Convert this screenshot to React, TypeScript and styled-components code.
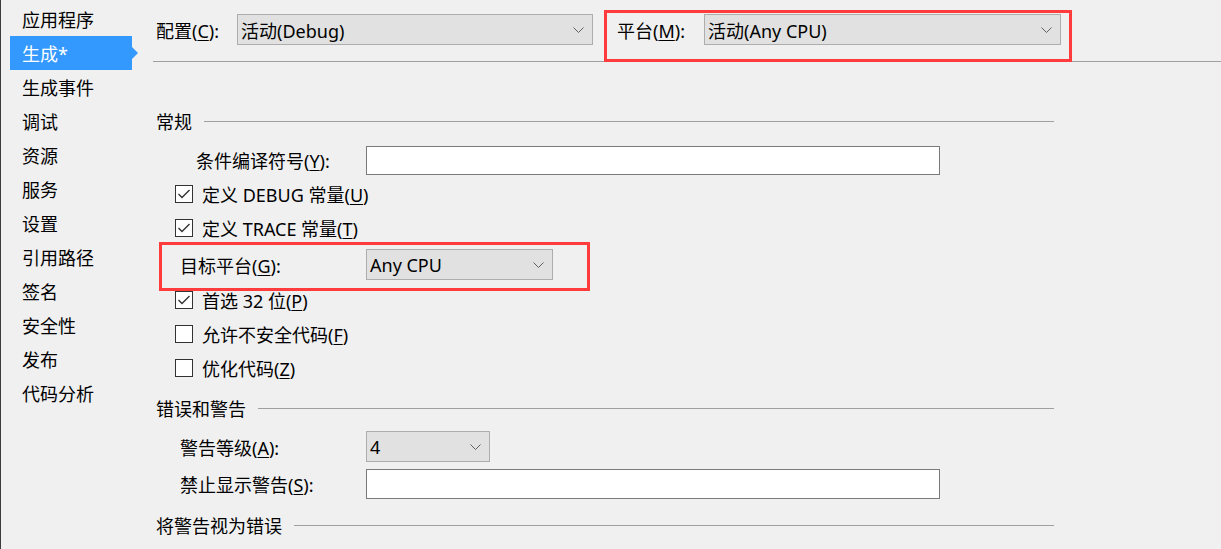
import React from 'react';
import styled, { createGlobalStyle } from 'styled-components';

const GlobalStyle = createGlobalStyle`
  html, body {
    margin: 0;
    padding: 0;
    background: #f0f0f0;
  }
  body {
    font-family: 'Noto Sans', 'Noto Sans CJK SC', sans-serif;
    font-size: 18px;
    color: #000;
  }
  * {
    box-sizing: border-box;
  }
`;

const Page = styled.div`
  display: flex;
  width: 1221px;
  height: 549px;
  overflow: hidden;
  background: #f0f0f0;
`;

const Sidebar = styled.nav`
  width: 153px;
  flex-shrink: 0;
  border-left: 1px solid #3c3c3c;
  padding-top: 2px;
`;

const NavItem = styled.div<{ $active?: boolean }>`
  position: relative;
  display: flex;
  align-items: center;
  height: 34px;
  width: 122px;
  margin-left: 9px;
  padding-left: 12px;
  white-space: nowrap;
  background: ${p => (p.$active ? '#3399ff' : 'transparent')};
  color: ${p => (p.$active ? '#fff' : '#000')};

  ${p =>
    p.$active &&
    `
    &::after {
      content: '';
      position: absolute;
      right: -6px;
      top: 50%;
      transform: translateY(-50%);
      border-left: 6px solid #3399ff;
      border-top: 6px solid transparent;
      border-bottom: 6px solid transparent;
    }
  `}
`;

const Main = styled.main`
  flex: 1;
  display: flex;
  flex-direction: column;
`;

const TopBar = styled.div`
  display: flex;
  align-items: flex-start;
  height: 62px;
  padding: 10px 0 0 3px;
  border-bottom: 1px solid #a0a0a0;
`;

const TopGroup = styled.div`
  display: flex;
  align-items: center;
  margin-top: 4px;
`;

// red annotation frame round the platform picker
const PlatformBox = styled.div`
  display: flex;
  align-items: flex-start;
  width: 468px;
  height: 52px;
  margin-left: 11px;
  padding: 1px 8px 0 10px;
  border: 3px solid #ff3b3b;
`;

const InlineField = styled.div`
  display: flex;
  align-items: center;
  height: 31px;
`;

const TopLabel = styled.span<{ $w: number }>`
  width: ${p => p.$w}px;
  white-space: nowrap;
`;

const Select = styled.div<{ $w: number; $h?: number }>`
  display: flex;
  align-items: center;
  justify-content: space-between;
  width: ${p => p.$w}px;
  height: ${p => p.$h ?? 31}px;
  padding: 0 8px 0 3px;
  border: 1px solid #adadad;
  background: #e1e1e1;
  white-space: nowrap;
`;

const TextBox = styled.div<{ $h?: number }>`
  width: 574px;
  height: ${p => p.$h ?? 29}px;
  border: 1px solid #7a7a7a;
  background: #fff;
`;

const Body = styled.div`
  display: flex;
  flex-direction: column;
  width: 901px;
  padding-left: 3px;
`;

const SectionHeader = styled.div<{ $top: number }>`
  display: flex;
  align-items: center;
  gap: 12px;
  height: 34px;
  margin-top: ${p => p.$top}px;
  white-space: nowrap;

  &::after {
    content: '';
    flex: 1;
    height: 1px;
    background: #a0a0a0;
  }
`;

const FieldRow = styled.div<{ $top?: number; $h: number }>`
  display: grid;
  grid-template-columns: 210px auto;
  align-items: center;
  height: ${p => p.$h}px;
  margin-top: ${p => p.$top ?? 0}px;
`;

const TargetRow = styled(FieldRow)`
  position: relative;

  &::before {
    content: '';
    position: absolute;
    left: 3px;
    top: -7px;
    width: 425px;
    bottom: -11px;
    border: 3px solid #ff3b3b;
    pointer-events: none;
  }
`;

const FieldLabel = styled.span<{ $indent: number }>`
  padding-left: ${p => p.$indent}px;
  white-space: nowrap;
`;

const CheckRow = styled.label<{ $top?: number }>`
  display: flex;
  align-items: center;
  gap: 9px;
  height: 34px;
  padding-left: 19px;
  margin-top: ${p => p.$top ?? 0}px;
  white-space: nowrap;
`;

const Box = styled.span`
  display: flex;
  align-items: center;
  justify-content: center;
  width: 18px;
  height: 18px;
  border: 1px solid #333;
  background: #fff;
`;

const Key = styled.u`
  text-underline-offset: 2px;
  text-decoration-thickness: 1px;
`;

const Chevron = () => (
  <svg width='11' height='6' viewBox='0 0 11 6'>
    <path d='M0.5 0.5 L5.5 5.5 L10.5 0.5' fill='none' stroke='#606060' strokeWidth='1' />
  </svg>
);

const Check = ({ checked }: { checked: boolean }) => (
  <Box>
    {checked && (
      <svg width='14' height='12' viewBox='0 0 14 12'>
        <path d='M1.5 6 L5 9.5 L12.5 2' fill='none' stroke='#333' strokeWidth='1.4' />
      </svg>
    )}
  </Box>
);

const navItems = [
  '应用程序',
  '生成*',
  '生成事件',
  '调试',
  '资源',
  '服务',
  '设置',
  '引用路径',
  '签名',
  '安全性',
  '发布',
  '代码分析',
];

const label = (text: string, key: string, colon = true) => (
  <>
    {text}(<Key>{key}</Key>){colon ? ':' : ''}
  </>
);

export default function App() {
  return (
    <>
      <GlobalStyle />
      <Page>
        <Sidebar>
          {navItems.map((item, i) => (
            <NavItem key={item} $active={i === 1}>
              {item}
            </NavItem>
          ))}
        </Sidebar>
        <Main>
          <TopBar>
            <TopGroup>
              <TopLabel $w={81}>{label('配置', 'C')}</TopLabel>
              <Select $w={356}>
                活动(Debug)
                <Chevron />
              </Select>
            </TopGroup>
            <PlatformBox>
              <InlineField>
                <TopLabel $w={87}>{label('平台', 'M')}</TopLabel>
                <Select $w={357}>
                  活动(Any CPU)
                  <Chevron />
                </Select>
              </InlineField>
            </PlatformBox>
          </TopBar>

          <Body>
            <SectionHeader $top={42}>常规</SectionHeader>
            <FieldRow $top={5} $h={34}>
              <FieldLabel $indent={40}>{label('条件编译符号', 'Y')}</FieldLabel>
              <TextBox />
            </FieldRow>
            <CheckRow>
              <Check checked />
              <span>定义 DEBUG 常量(<Key>U</Key>)</span>
            </CheckRow>
            <CheckRow>
              <Check checked />
              <span>定义 TRACE 常量(<Key>T</Key>)</span>
            </CheckRow>
            <TargetRow $top={4} $h={31}>
              <FieldLabel $indent={24}>{label('目标平台', 'G')}</FieldLabel>
              <Select $w={187}>
                Any CPU
                <Chevron />
              </Select>
            </TargetRow>
            <CheckRow $top={3}>
              <Check checked />
              <span>首选 32 位(<Key>P</Key>)</span>
            </CheckRow>
            <CheckRow>
              <Check checked={false} />
              <span>允许不安全代码(<Key>F</Key>)</span>
            </CheckRow>
            <CheckRow>
              <Check checked={false} />
              <span>优化代码(<Key>Z</Key>)</span>
            </CheckRow>

            <SectionHeader $top={6}>错误和警告</SectionHeader>
            <FieldRow $top={6} $h={31}>
              <FieldLabel $indent={24}>{label('警告等级', 'A')}</FieldLabel>
              <Select $w={124}>
                4
                <Chevron />
              </Select>
            </FieldRow>
            <FieldRow $top={7} $h={30}>
              <FieldLabel $indent={24}>{label('禁止显示警告', 'S')}</FieldLabel>
              <TextBox $h={30} />
            </FieldRow>

            <SectionHeader $top={9}>将警告视为错误</SectionHeader>
          </Body>
        </Main>
      </Page>
    </>
  );
}
